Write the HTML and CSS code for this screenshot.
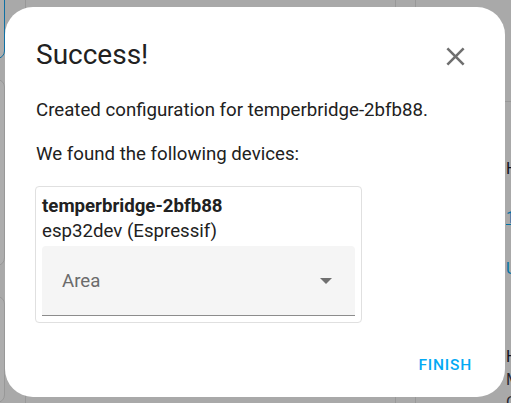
FILE: index.html
```html
<!DOCTYPE html>
<html>
<head>
<meta charset="utf-8">
<link rel="stylesheet" href="styles.css">
</head>
<body>
<div class="page">
  <div class="col col1">
    <div class="bgcard bgcard-active"></div>
    <div class="bgcard bgcard-tall"></div>
    <div class="bgcard bgcard-low"></div>
  </div>
  <div class="col col2">
    <a class="bglink">Actions</a>
  </div>
  <div class="col col3"></div>
  <div class="col col4">
    <div class="bgrule"></div>
    <div class="bghead">Hub</div>
    <a class="bglink2">1 device</a>
    <a class="bglink3">Update</a>
    <div class="bghead2">Home</div>
    <div class="bgline">Manual</div>
    <div class="bgline">Cloud</div>
  </div>
</div>
<div class="scrim"></div>
<div class="dialog">
  <div class="dialog-head">
    <h2 class="title">Success!</h2>
    <button class="close" aria-label="Close">
      <svg viewBox="0 0 24 24" width="31" height="31"><path fill="#6f6f6f" d="M19,6.41L17.59,5L12,10.59L6.41,5L5,6.41L10.59,12L5,17.59L6.41,19L12,13.41L17.59,19L19,17.59L13.41,12L19,6.41Z"/></svg>
    </button>
  </div>
  <p class="text">Created configuration for temperbridge-2bfb88.</p>
  <p class="text">We found the following devices:</p>
  <div class="device">
    <div class="dev-name">temperbridge-2bfb88</div>
    <div class="dev-model">esp32dev (Espressif)</div>
    <div class="select">
      <span class="select-label">Area</span>
      <svg class="arrow" viewBox="0 0 12 6" width="12" height="6"><polygon points="0,0 12,0 6,6" fill="#707070"/></svg>
    </div>
  </div>
  <div class="actions">
    <button class="finish">FINISH</button>
  </div>
</div>
</body>
</html>
```

FILE: styles.css
```css
* { box-sizing: border-box; }
html, body { margin: 0; padding: 0; }
body {
  font-family: Roboto, "Noto Sans", sans-serif;
  background: #fafafa;
  overflow: hidden;
}
.page {
  display: flex;
  height: 403px;
  overflow: hidden;
}
.col { flex: none; height: 100%; }
.col1 {
  width: 26px;
  border-right: 1px solid #e0e0e0;
  display: flex;
  flex-direction: column;
}
.bgcard {
  margin-left: -30px;
  width: 35px;
  border: 1px solid #e0e0e0;
  border-radius: 8px;
  background: #fff;
}
.bgcard-active {
  margin-top: -20px;
  height: 88px;
  border-color: #18a6f0;
  border-width: 1.5px;
}
.bgcard-tall { margin-top: 20px; height: 210px; }
.bgcard-low { margin-top: 30px; height: 120px; }
.col2 {
  width: 370px;
  border-right: 1px solid #e0e0e0;
  padding-left: 91px;
}
.bglink {
  display: block;
  width: max-content;
  margin-top: -17px;
  color: #0288d1;
  text-decoration: underline;
  font-size: 18.67px;
  line-height: 18px;
}
.col3 {
  width: 20px;
  border-right: 1px solid #e0e0e0;
}
.col4 {
  flex: 1;
  padding-left: 90px;
  display: flex;
  flex-direction: column;
  align-items: flex-start;
  white-space: nowrap;
  font-size: 16px;
}
.bgrule {
  margin-top: 101px;
  margin-left: -90px;
  width: 200px;
  border-top: 1px solid #e0e0e0;
}
.bghead { margin-top: 58px; color: #1c1c2e; line-height: 18px; }
.bglink2 { margin-top: 31px; color: #03a9f4; text-decoration: underline; line-height: 18px; }
.bglink3 { margin-top: 33px; color: #03a9f4; line-height: 18px; }
.bghead2 { margin-top: 70px; color: #1c1c2e; line-height: 18px; }
.bgline { margin-top: 5px; color: #3a3a48; line-height: 18px; }

.scrim {
  position: fixed;
  inset: 0;
  background: rgba(0, 0, 0, 0.32);
}
.dialog {
  position: fixed;
  left: 5px;
  top: 7px;
  width: 500px;
  height: 390px;
  background: #fff;
  border-radius: 28px;
  padding: 32px 34px 0 30px;
  color: #212121;
}
.dialog-head {
  display: flex;
  justify-content: space-between;
  align-items: flex-start;
}
.title {
  margin: 0;
  font-size: 28px;
  font-weight: 400;
  line-height: 32px;
  padding-left: 1px;
}
.close {
  margin: 2px 0 0 0;
  padding: 0;
  border: 0;
  background: none;
  width: 31px;
  height: 31px;
  display: block;
}
.close svg { display: block; }
.text {
  margin: 0;
  font-size: 18.67px;
  line-height: 24px;
  padding-left: 1px;
}
.dialog-head + .text { margin-top: 26px; }
.text + .text { margin-top: 20px; }
.device {
  margin-top: 20px;
  width: 327px;
  border: 1px solid #e0e0e0;
  border-radius: 4px;
  padding: 7px 6px 6px 6px;
  font-size: 18.67px;
}
.dev-name { font-weight: 700; line-height: 25px; }
.dev-model { line-height: 25px; }
.select {
  margin-top: 2px;
  height: 70px;
  background: #f5f5f5;
  border-radius: 4px 4px 0 0;
  border-bottom: 1px solid #8c8c8c;
  display: flex;
  align-items: center;
  justify-content: space-between;
  padding: 0 23px 0 20px;
}
.select-label {
  color: #6b6b6b;
  font-size: 18.67px;
  line-height: 24px;
}
.arrow { display: block; margin-top: 0; }
.actions {
  display: flex;
  justify-content: flex-end;
  margin-top: 32px;
}
.finish {
  border: 0;
  background: none;
  padding: 0;
  font-family: Roboto, sans-serif;
  font-size: 15.5px;
  font-weight: 500;
  letter-spacing: 0.8px;
  line-height: 20px;
  color: #03a9f4;
  margin-right: -1px;
}
```
